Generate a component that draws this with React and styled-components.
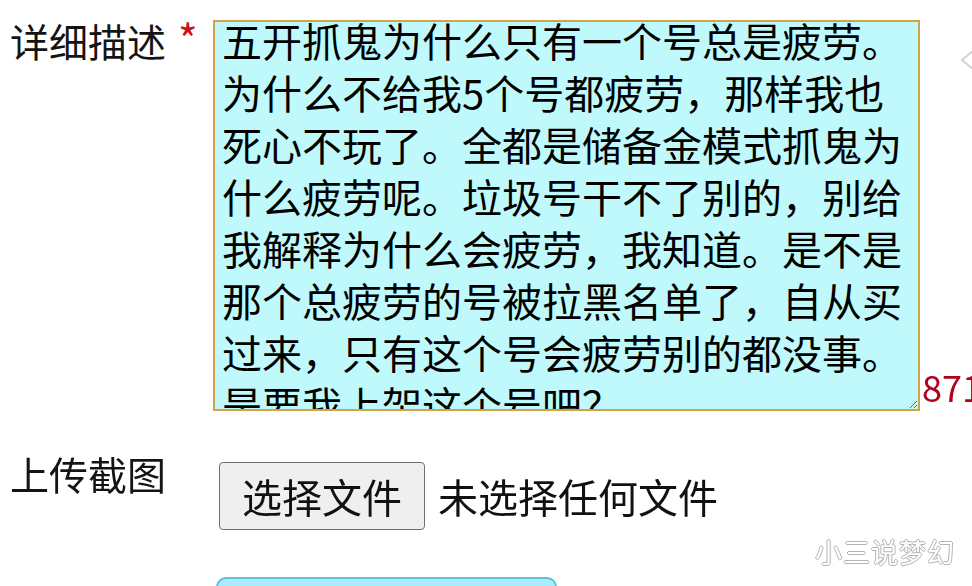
import React, { useEffect, useRef } from 'react'
import styled, { createGlobalStyle } from 'styled-components'

const GlobalStyle = createGlobalStyle`
    html, body {
        margin: 0;
        padding: 0;
        background: #ffffff;
        overflow: hidden;
    }
    body {
        font-family: "Noto Sans CJK SC", "Noto Sans", sans-serif;
        color: #111111;
    }
`;

const Page = styled.div`
    position: relative;
    width: 972px;
    height: 586px;
    overflow: hidden;
    padding: 20px 0 0 10px;
    box-sizing: border-box;
`;

const Form = styled.form`
    display: grid;
    grid-template-columns: 203px 1fr;
    align-items: start;
`;

const Label = styled.div`
    font-size: 39px;
    line-height: 40px;
    margin-top: ${props => props.offset || 0}px;
    color: #141414;
    white-space: nowrap;
`;

const Required = styled.span`
    color: #d01010;
    font-size: 42px;
    margin-left: 12px;
    vertical-align: 1px;
`;

const Field = styled.div`
    display: flex;
    align-items: flex-end;
    white-space: nowrap;
`;

const TextArea = styled.textarea`
    width: 707px;
    height: 391px;
    box-sizing: border-box;
    margin: 0;
    padding: 2px 7px;
    border: 2px solid #d0a44c;
    background: #bff9fb;
    color: #000000;
    font-family: "Noto Sans CJK SC", sans-serif;
    font-size: 40px;
    line-height: 52px;
    overflow: hidden;
    resize: both;
    outline: none;
`;

const Counter = styled.span`
    color: #b3001c;
    font-size: 36px;
    line-height: 34px;
    margin: 0 0 8px 2px;
    font-family: "Noto Sans CJK SC", sans-serif;
`;

const FileRow = styled.div`
    display: flex;
    align-items: center;
    margin: 51px 0 0 6px;
`;

const FileButton = styled.button`
    height: 68px;
    padding: 0 22px;
    border: 1px solid #6f6f6f;
    border-radius: 4px;
    background: #efefef;
    color: #111111;
    font-family: "Noto Sans CJK SC", sans-serif;
    font-size: 40px;
    line-height: 1;
`;

const FileName = styled.span`
    margin-left: 13px;
    font-size: 40px;
    color: #111111;
`;

const Submit = styled.button`
    grid-column: 2;
    width: 341px;
    height: 64px;
    margin: 47px 0 0 3px;
    border: 2px solid #5dbfe2;
    border-radius: 10px 10px 0 0;
    background: #a9ecfb;
`;

const Watermark = styled.div`
    position: absolute;
    right: 17px;
    top: 532px;
    font-size: 27px;
    letter-spacing: 1px;
    color: #ffffff;
    text-shadow: 1px 0 0 #b4b4b4, -1px 0 0 #b4b4b4, 0 1px 0 #b4b4b4, 0 -1px 0 #b4b4b4;
`;

const EdgeArrow = styled.svg`
    position: absolute;
    left: 959px;
    top: 47px;
`;

const description =
    '五开抓鬼为什么只有一个号总是疲劳。为什么不给我5个号都疲劳，那样我也死心不玩了。全都是储备金模式抓鬼为什么疲劳呢。垃圾号干不了别的，别给我解释为什么会疲劳，我知道。是不是那个总疲劳的号被拉黑名单了，自从买过来，只有这个号会疲劳别的都没事。是要我上架这个号吧？'

const App = () => {
    const areaRef = useRef(null)

    // keep the caret at the end, with the box scrolled a little like a half-typed note
    useEffect(() => {
        const el = areaRef.current
        if (el) {
            el.focus()
            el.setSelectionRange(description.length, description.length)
            el.scrollTop = 10
        }
    }, [])

    return (
        <Page>
            <GlobalStyle />
            <Form onSubmit={e => e.preventDefault()}>
                <Label offset={-2}>
                    详细描述<Required>*</Required>
                </Label>
                <Field>
                    <TextArea ref={areaRef} defaultValue={description} />
                    <Counter>871</Counter>
                </Field>

                <Label offset={42}>上传截图</Label>
                <FileRow>
                    <FileButton type="button">选择文件</FileButton>
                    <FileName>未选择任何文件</FileName>
                </FileRow>

                <Submit type="submit" aria-label="提交" />
            </Form>

            <Watermark>小三说梦幻</Watermark>
            <EdgeArrow width="14" height="26" viewBox="0 0 14 26">
                <polyline points="14,4 3,13 14,22" fill="none" stroke="#d2d2d2" strokeWidth="2" />
            </EdgeArrow>
        </Page>
    )
}

export default App
